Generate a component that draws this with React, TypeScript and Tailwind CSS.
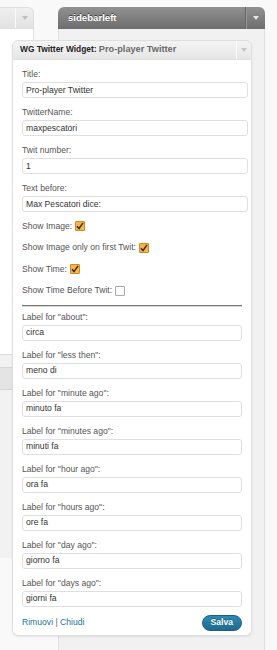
const TOP_FIELDS = [
  { label: "Title:", value: "Pro-player Twitter" },
  { label: "TwitterName:", value: "maxpescatori" },
  { label: "Twit number:", value: "1" },
  { label: "Text before:", value: "Max Pescatori dice:" },
];

const CHECKS = [
  { label: "Show Image:", checked: true },
  { label: "Show Image only on first Twit:", checked: true },
  { label: "Show Time:", checked: true },
  { label: "Show Time Before Twit:", checked: false },
];

const TIME_LABELS = [
  { key: "about", value: "circa" },
  { key: "less then", value: "meno di" },
  { key: "minute ago", value: "minuto fa" },
  { key: "minutes ago", value: "minuti fa" },
  { key: "hour ago", value: "ora fa" },
  { key: "hours ago", value: "ore fa" },
  { key: "day ago", value: "giorno fa" },
  { key: "days ago", value: "giorni fa" },
];

function Arrow({ color }: { color: string }) {
  return (
    <svg width="6" height="4" viewBox="0 0 6 4" aria-hidden="true">
      <path d="M0 0h6L3 4z" fill={color} />
    </svg>
  );
}

function Field({ label, value, wide }: { label: string; value: string; wide?: boolean }) {
  return (
    <div className="mb-[8px]">
      <div className="h-[12px] text-[8.6px] leading-[12px] text-[#555]">{label}</div>
      <div
        className={`mt-[2px] flex h-[16px] items-center rounded-[3px] border border-[#dfdfdf] bg-white pl-[3px] text-[8.6px] text-[#333] ${
          wide ? "w-[226px]" : "w-full"
        }`}
      >
        {value}
      </div>
    </div>
  );
}

function Checkbox({ checked }: { checked: boolean }) {
  if (!checked) {
    return <span className="ml-[3px] inline-block h-[10px] w-[10px] rounded-[1px] border border-[#aaa] bg-white" />;
  }
  return (
    <span className="ml-[3px] inline-flex h-[10px] w-[10px] items-center justify-center rounded-[1px] border border-[#d08a25] bg-[#f5b54a]">
      <svg width="8" height="8" viewBox="0 0 8 8" aria-hidden="true">
        <path d="M1 4.2l2 2.3L7 0.8" stroke="#3a2a10" strokeWidth="1.4" fill="none" />
      </svg>
    </span>
  );
}

export default function App() {
  return (
    <div className="relative h-[650px] w-[277px] overflow-hidden bg-[#f9f9f9] font-['Liberation_Sans',Arial,sans-serif]">
      {/* ── Background sidebars ─────────────────────────────── */}
      <div className="flex pt-[7px]">
        {/* Left (inactive) sidebar */}
        <div className="w-[34px]">
          <div className="flex h-[22px] items-center rounded-tr-[6px] border border-l-0 border-[#dfdfdf] bg-gradient-to-b from-[#efefef] to-[#e2e2e2]">
            <div className="h-full w-[15px]" />
            <div className="h-full border-l border-[#fafafa]" />
            <div className="flex flex-1 justify-center">
              <Arrow color="#bdbdbd" />
            </div>
          </div>
          <div className="h-[529px] border-r border-[#dfdfdf] bg-[#f2f2f2]">
            <div className="h-[326px] border-b border-[#dfdfdf] bg-white" />
            <div className="mt-[12px] h-[23px] border-y border-[#d6d6d6] bg-[#e4e4e4]" />
          </div>
        </div>

        {/* Right (active) sidebar */}
        <div className="ml-[24px] w-[207px]">
          <div className="flex h-[22px] items-center rounded-t-[6px] bg-gradient-to-b from-[#919191] to-[#6d6d6d]">
            <span className="flex-1 pl-[10px] text-[9.6px] font-bold text-white [text-shadow:0_-1px_0_#3f3f3f]">
              sidebarleft
            </span>
            <div className="h-full border-l border-[#666]" />
            <div className="h-full border-l border-[#9a9a9a]" />
            <div className="flex w-[18px] justify-center">
              <Arrow color="#e6e6e6" />
            </div>
          </div>
          <div className="h-[621px] border-x border-[#dfdfdf] bg-[#f1f1f1]" />
        </div>
      </div>

      {/* ── Dragged widget (overlaps both sidebars) ─────────── */}
      <div className="absolute left-[12px] top-[40px] w-[240px] rounded-[6px] shadow-[0_1px_2px_rgba(0,0,0,0.08)]">
        <div className="flex h-[20px] items-center rounded-t-[6px] border border-[#dfdfdf] bg-gradient-to-b from-[#f4f4f4] to-[#e6e6e6]">
          <span className="flex-1 truncate pl-[7px] text-[8.4px] font-bold text-[#222]">
            WG Twitter Widget:{" "}
            <span className="text-[9.2px] text-[#6a6a6a]">Pro-player Twitter</span>
          </span>
          <div className="h-full border-l border-[#fbfbfb]" />
          <div className="flex w-[14px] justify-center">
            <Arrow color="#c4c4c4" />
          </div>
        </div>

        <div className="rounded-b-[6px] border border-t-0 border-[#dfdfdf] bg-white px-[9px] pb-[4px] pt-[8px]">
          {TOP_FIELDS.map((f) => (
            <Field key={f.label} label={f.label} value={f.value} wide />
          ))}

          <div className="flex flex-col gap-[9.5px]">
            {CHECKS.map((c) => (
              <div key={c.label} className="flex h-[12px] items-center text-[8.6px] text-[#555]">
                {c.label}
                <Checkbox checked={c.checked} />
              </div>
            ))}
          </div>

          <div className="mb-[4px] mt-[8px] border-t border-[#777]" />
          <div className="-mt-[4px] mb-[4px] border-t border-[#d8d8d8]" />

          {TIME_LABELS.map((t) => (
            <Field key={t.key} label={`Label for "${t.key}":`} value={t.value} />
          ))}

          <div className="mt-[5px] flex items-center justify-between">
            <span className="text-[8.6px] text-[#21759b]">
              Rimuovi <span className="text-[#666]">|</span> Chiudi
            </span>
            <button className="h-[16px] rounded-full border border-[#1b607f] bg-gradient-to-b from-[#2d8ab5] to-[#1e6a8f] px-[8px] text-[8.6px] font-bold text-white [text-shadow:0_-1px_0_rgba(0,0,0,0.3)]">
              Salva
            </button>
          </div>
        </div>
      </div>
    </div>
  );
}
